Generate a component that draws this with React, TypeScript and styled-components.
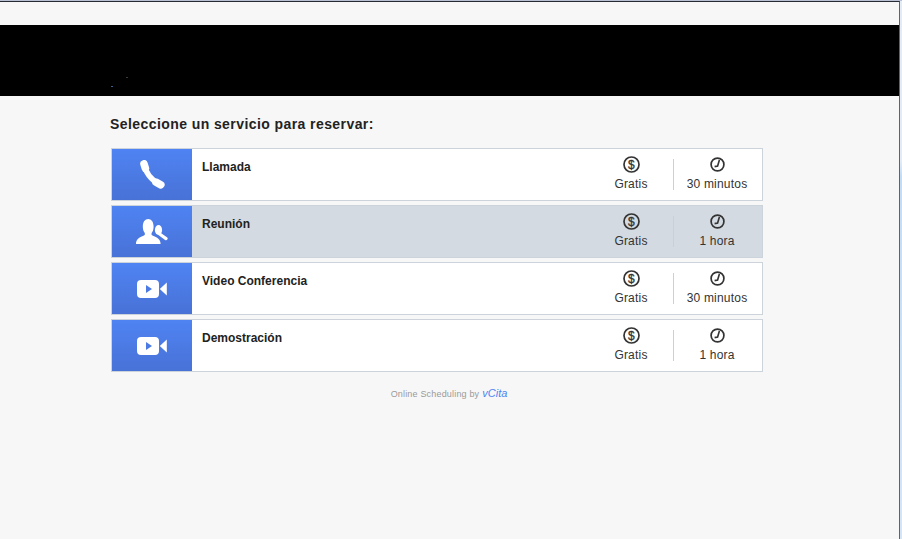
import styled, { createGlobalStyle } from "styled-components"

const GlobalStyle = createGlobalStyle`
  html, body {
    margin: 0;
    padding: 0;
    height: 100%;
    background: #f7f7f7;
    overflow: hidden;
  }
`;

const Window = styled.div`
  box-sizing: border-box;
  width: 902px;
  height: 539px;
  padding-right: 2px;
  border-top: 1px solid #b9c0d4;
  background: linear-gradient(#e3ebf5, #e3ebf5 160px, #c3dcf6 175px, #d5e5f6);
`;

const Frame = styled.div`
  box-sizing: border-box;
  height: 100%;
  background: #f7f7f7;
  border-top: 1px solid #262b36;
  border-right: 1px solid #5c6470;
  font-family: "Liberation Sans", Arial, sans-serif;
  color: #222;
`;

const Header = styled.div`
  position: relative;
  height: 71px;
  margin-top: 23px;
  background: #000;
`;

const Speck = styled.span<{ $left: number; $top: number; $color: string }>`
  position: absolute;
  left: ${props => props.$left}px;
  top: ${props => props.$top}px;
  width: 2px;
  height: 1px;
  background: ${props => props.$color};
`;

const Content = styled.div`
  padding: 20px 0 0 110px;
`;

const Title = styled.h1`
  margin: 0 0 16px;
  font-size: 14px;
  line-height: 16px;
  font-weight: bold;
  letter-spacing: 0.42px;
  color: #222;
`;

const List = styled.div`
  display: flex;
  flex-direction: column;
  gap: 4px;
  width: 652px;
  margin-left: 1px;
`;

const Row = styled.div<{ $active?: boolean }>`
  box-sizing: border-box;
  display: flex;
  height: 53px;
  border: 1px solid #ccd3da;
  background: ${props => (props.$active ? "#d3dae1" : "#fff")};
`;

const IconCell = styled.div`
  flex: 0 0 80px;
  display: flex;
  align-items: center;
  justify-content: center;
  background: linear-gradient(#4f83f3, #4872d6);
`;

const Name = styled.div`
  flex: 1;
  padding: 10px 0 0 10px;
  font-size: 12px;
  line-height: 16px;
  font-weight: bold;
  color: #222;
`;

const Meta = styled.div<{ $wide?: boolean }>`
  box-sizing: border-box;
  display: flex;
  flex-direction: column;
  align-items: center;
  width: ${props => (props.$wide ? "88px" : "85px")};
  padding: 7px ${props => (props.$wide ? "2px" : "0")} 0 ${props => (props.$wide ? "0" : "1px")};
  font-size: 12px;
  line-height: 16px;
  letter-spacing: 0.2px;
  color: #333;
`;

const Divider = styled.div`
  align-self: center;
  width: 1px;
  height: 31px;
  background: #c8d0d8;
`;

const IconSlot = styled.div`
  display: flex;
  align-items: center;
  justify-content: center;
  height: 16px;
  margin-bottom: 4px;
`;

const Footer = styled.div`
  box-sizing: border-box;
  width: 652px;
  margin: 14px 0 0 1px;
  padding-left: 24px;
  display: flex;
  justify-content: center;
  align-items: baseline;
  gap: 3px;
  font-size: 9px;
  line-height: 14px;
  letter-spacing: 0.18px;
  color: #9a9a9a;
`;

const Brand = styled.span`
  font-size: 11px;
  font-style: italic;
  letter-spacing: 0;
  color: #4f83f3;
`;

const PhoneIcon = () => (
  <svg width="25" height="29" viewBox="0 0 25 29" fill="none" stroke="#fff" strokeLinecap="round">
    <path d="M4.5 4 C5 12 11 20 20 24.5" strokeWidth="5.4" />
    <path d="M4 3.8 L5.4 8.4" strokeWidth="7.6" />
    <path d="M16 22.2 L20.8 24.8" strokeWidth="7.6" />
  </svg>
)

const PeopleIcon = () => (
  <svg width="32" height="25" viewBox="0 0 32 25">
    <ellipse cx="22.5" cy="11" rx="3.6" ry="5" fill="#fff" />
    <path d="M23.6 15 L30 19.6" stroke="#fff" strokeWidth="3.2" strokeLinecap="round" />
    <path d="M0 25 C0 20.5 3 18.6 8 16.6 C9.4 15.6 9 14.4 8.2 13 C7.2 11.6 6.8 9.6 6.8 7.4 C6.8 3 9 0 12.2 0 C15.4 0 17.6 3 17.6 7.4 C17.6 9.6 17.2 11.6 16.2 13 C15.4 14.4 15 15.6 16.4 16.6 C21.4 18.6 24.6 20.5 24.6 25 Z" fill="#fff" stroke="#4a79df" strokeWidth="1" paintOrder="stroke" />
  </svg>
)

const VideoIcon = () => (
  <svg width="30" height="18" viewBox="0 0 30 18" fill="#fff">
    <path fillRule="evenodd" d="M4 0 H18 C20.6 0 22 1.4 22 4 V14 C22 16.6 20.6 18 18 18 H4 C1.4 18 0 16.6 0 14 V4 C0 1.4 1.4 0 4 0 Z M9 5 V13 L15 9 Z" />
    <path d="M22.8 9 L29.8 2.6 V15.4 Z" />
  </svg>
)

const DollarIcon = () => (
  <svg width="17" height="17" viewBox="0 0 17 17">
    <circle cx="8.5" cy="8.5" r="7.5" fill="none" stroke="#333" strokeWidth="1.7" />
    <text x="8.5" y="12.8" textAnchor="middle" fontSize="12" fontFamily="Liberation Sans, Arial, sans-serif" fill="#333" stroke="#333" strokeWidth="0.3">$</text>
  </svg>
)

const ClockIcon = () => (
  <svg width="15" height="15" viewBox="0 0 15 15">
    <circle cx="7.5" cy="7.5" r="6.4" fill="none" stroke="#333" strokeWidth="1.7" />
    <path d="M9.4 3 L7.6 9 L4.6 9.6" fill="none" stroke="#333" strokeWidth="1.6" />
  </svg>
)

const services = [
  { name: "Llamada", icon: <PhoneIcon />, duration: "30 minutos" },
  { name: "Reunión", icon: <PeopleIcon />, duration: "1 hora", active: true },
  { name: "Video Conferencia", icon: <VideoIcon />, duration: "30 minutos" },
  { name: "Demostración", icon: <VideoIcon />, duration: "1 hora" },
]

function App() {
  return (
    <>
      <GlobalStyle />
      <Window>
        <Frame>
          <Header>
            <Speck $left={126} $top={52} $color="#3a3a3a" />
            <Speck $left={111} $top={61} $color="#3d5f96" />
          </Header>
          <Content>
            <Title>Seleccione un servicio para reservar:</Title>
            <List>
              {services.map(service => (
                <Row key={service.name} $active={service.active}>
                  <IconCell>{service.icon}</IconCell>
                  <Name>{service.name}</Name>
                  <Meta>
                    <IconSlot><DollarIcon /></IconSlot>
                    Gratis
                  </Meta>
                  <Divider />
                  <Meta $wide>
                    <IconSlot><ClockIcon /></IconSlot>
                    {service.duration}
                  </Meta>
                </Row>
              ))}
            </List>
            <Footer>
              Online Scheduling by <Brand>vCita</Brand>
            </Footer>
          </Content>
        </Frame>
      </Window>
    </>
  )
}

export default App
